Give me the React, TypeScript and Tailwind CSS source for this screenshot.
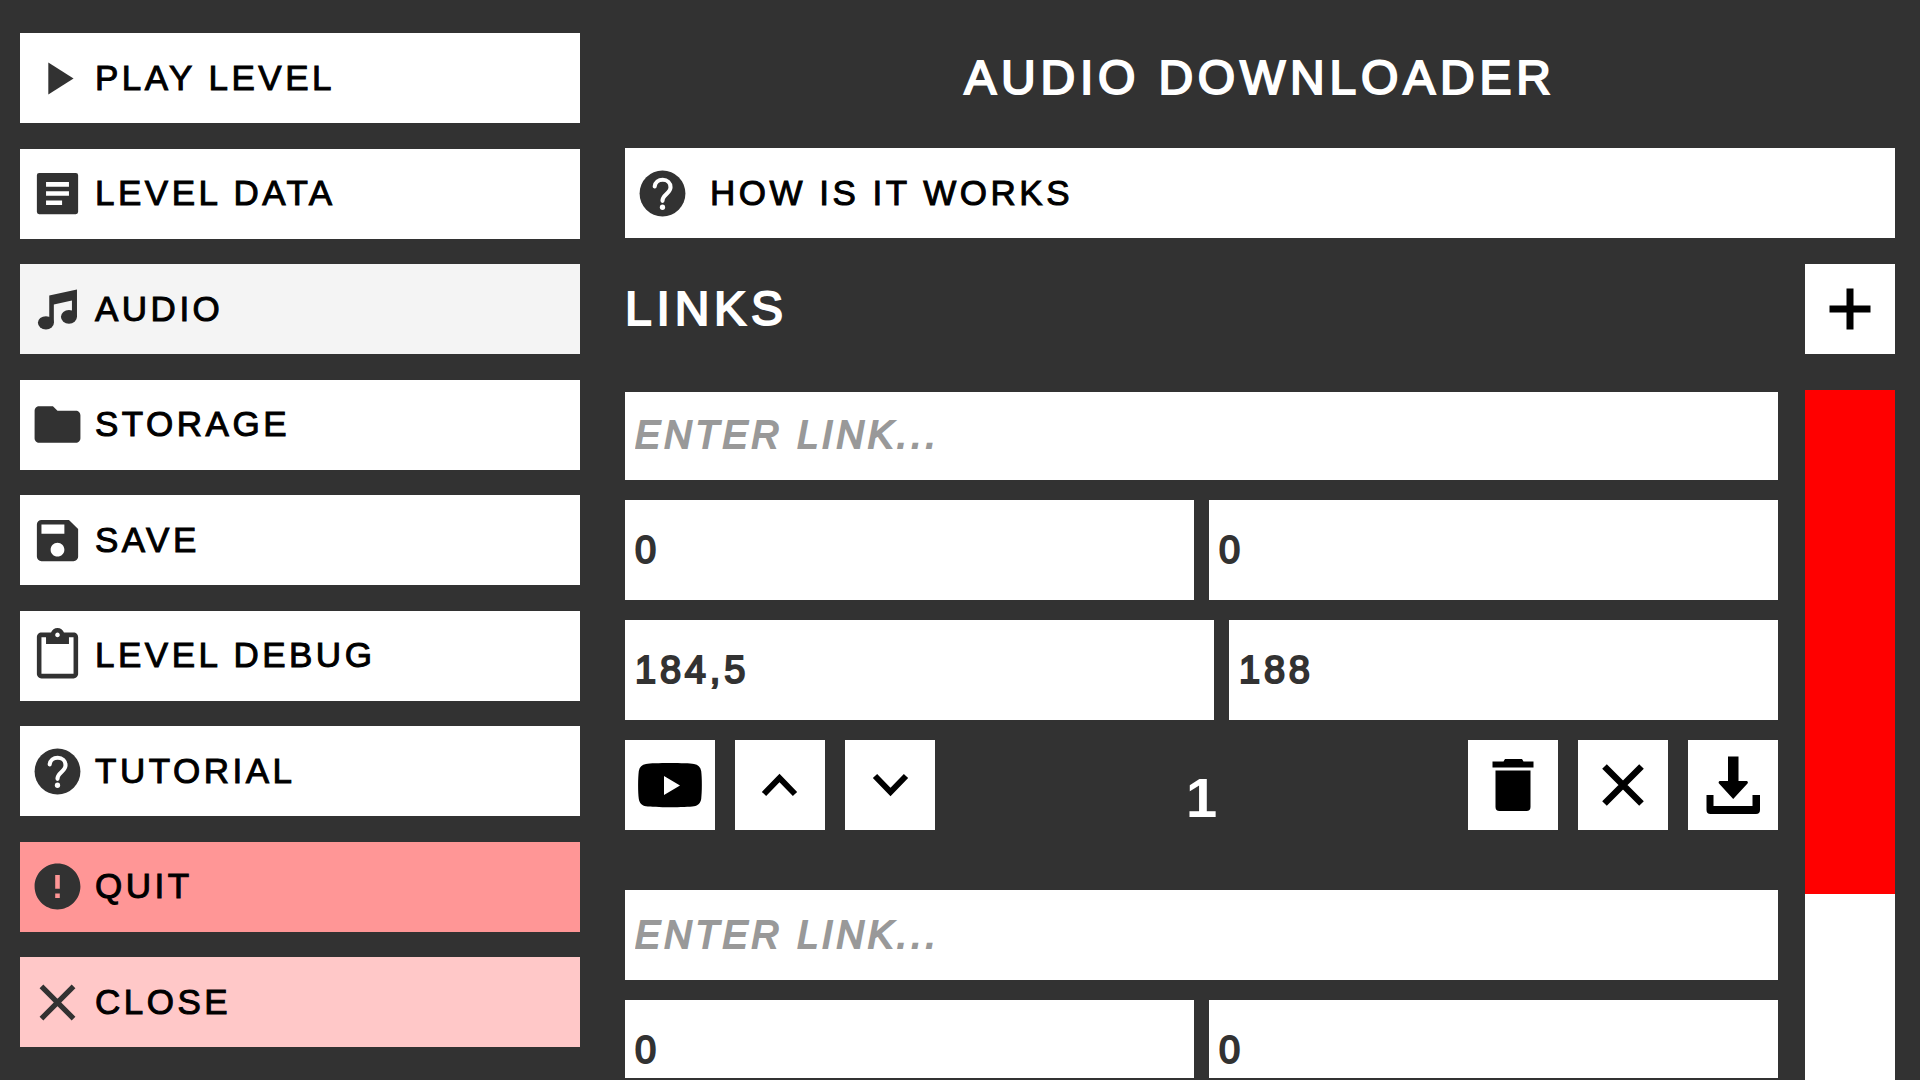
import { ReactNode } from 'react';
import { MdContentPaste, MdError, MdFolder, MdPlayArrow, MdSave } from 'react-icons/md';

const ArticleIcon = () => (
  <svg viewBox="0 0 24 24" fill="currentColor" className="size-[55px] shrink-0" aria-hidden="true">
    <path fillRule="evenodd" d="M4 3h16a1 1 0 0 1 1 1v16a1 1 0 0 1-1 1H4a1 1 0 0 1-1-1V4a1 1 0 0 1 1-1zm3 4v2h10V7zm0 4v2h10v-2zm0 4v2h7v-2z" />
  </svg>
);

const MusicIcon = () => (
  <svg viewBox="0 0 24 24" fill="currentColor" className="size-[55px] shrink-0" aria-hidden="true">
    <path d="M8.4 5.9L20.5 3.3v12h-2.200V8.100l-7.900 1.700v8H8.400z" />
    <ellipse cx="6.950" cy="17.800" rx="3.500" ry="2.900" />
    <ellipse cx="17" cy="15.200" rx="3.500" ry="3" />
  </svg>
);

const HelpIcon = () => (
  <svg viewBox="0 0 24 24" className="size-[55px] shrink-0" aria-hidden="true">
    <circle cx="12" cy="12" r="10" fill="currentColor" />
    <path d="M8.600 8.900C8.800 7.100 10.200 6 12.100 6c2 0 3.400 1.400 3.400 3.300 0 2.700-3.500 3.200-3.500 5.900" fill="none" stroke="white" strokeWidth="1.800" strokeLinecap="round" />
    <circle cx="12" cy="18" r="1.150" fill="white" />
  </svg>
);

const CrossIcon = () => (
  <svg viewBox="0 0 24 24" className="size-[55px] shrink-0" aria-hidden="true">
    <path d="M5 5l14 14M19 5L5 19" fill="none" stroke="currentColor" strokeWidth="2.300" />
  </svg>
);

const menu: { label: string; icon: ReactNode; color: string }[] = [
  { label: 'PLAY LEVEL', icon: <MdPlayArrow className="size-[55px] shrink-0" />, color: 'bg-white' },
  { label: 'LEVEL DATA', icon: <ArticleIcon />, color: 'bg-white' },
  { label: 'AUDIO', icon: <MusicIcon />, color: 'bg-[#f4f4f4]' },
  { label: 'STORAGE', icon: <MdFolder className="size-[55px] shrink-0" />, color: 'bg-white' },
  { label: 'SAVE', icon: <MdSave className="size-[55px] shrink-0" />, color: 'bg-white' },
  { label: 'LEVEL DEBUG', icon: <MdContentPaste className="size-[55px] shrink-0" />, color: 'bg-white' },
  { label: 'TUTORIAL', icon: <HelpIcon />, color: 'bg-white' },
  { label: 'QUIT', icon: <MdError className="size-[55px] shrink-0" />, color: 'bg-[#ff9696]' },
  { label: 'CLOSE', icon: <CrossIcon />, color: 'bg-[#ffc8c8]' },
];

const links = [
  { id: 1, url: '', from: '0', to: '0', start: '184,5', end: '188' },
  { id: 2, url: '', from: '0', to: '0', start: '184,5', end: '188' },
];

const field =
  'min-w-0 bg-white px-[10px] text-[38px] tracking-widest text-[#323232] outline-none [-webkit-text-stroke:2px] placeholder:italic placeholder:text-[#999999] placeholder:opacity-100';

const menuText = 'text-[35px] tracking-widest text-black [-webkit-text-stroke:1px]';

const SquareButton = ({ label, children }: { label: string; children: ReactNode }) => (
  <button type="button" aria-label={label} className="size-[90px] shrink-0 bg-white text-black">
    <svg viewBox="0 0 90 90" fill="currentColor" className="size-full" aria-hidden="true">
      {children}
    </svg>
  </button>
);

const LinkCard = ({ link }: { link: (typeof links)[number] }) => (
  <li className="flex flex-col gap-5">
    <input className={`${field} h-[90px]`} aria-label={`Link ${link.id}`} placeholder="ENTER LINK..." defaultValue={link.url} />
    <div className="flex gap-[15px]">
      <input className={`${field} h-[100px] flex-1`} aria-label="From" defaultValue={link.from} />
      <input className={`${field} h-[100px] flex-1`} aria-label="To" defaultValue={link.to} />
    </div>
    <div className="grid grid-cols-[589fr_549fr] gap-[15px]">
      <input className={`${field} h-[100px]`} aria-label="Start" defaultValue={link.start} />
      <input className={`${field} h-[100px]`} aria-label="End" defaultValue={link.end} />
    </div>
    <div className="flex gap-5">
      <SquareButton label="Open on YouTube">
        <path fillRule="evenodd" d="M45 23c11 0 20 .3 24 1 4 .8 6.500 3 7.200 7 .9 7 .9 21 0 28-.7 4-3.200 6.700-7.200 7.300-8 1.300-40 1.300-48 0-4-.6-6.500-3.300-7.200-7.300-.9-7-.9-21 0-28 .7-4 3.200-6.200 7.200-7 4-.7 13-1 24-1zM39 36v19l16-9.500z" />
      </SquareButton>
      <SquareButton label="Move up">
        <path d="M29 54L44.500 38 60 54" fill="none" stroke="currentColor" strokeWidth="6" />
      </SquareButton>
      <SquareButton label="Move down">
        <path d="M30 36l15.500 16L61 36" fill="none" stroke="currentColor" strokeWidth="6" />
      </SquareButton>
      <span className="flex-1 self-end text-center text-[56px] leading-[64px] font-bold text-white">{link.id}</span>
      <SquareButton label="Delete">
        <path d="M24.500 21.500h11l1.500-2.500h17l1.500 2.500h10V27.500h-41zM27.500 30.500h35V67a4 4 0 0 1-4 4h-27a4 4 0 0 1-4-4z" />
      </SquareButton>
      <SquareButton label="Cancel">
        <path d="M26.500 26.500l37 37M63.500 26.500l-37 37" fill="none" stroke="currentColor" strokeWidth="6.500" />
      </SquareButton>
      <SquareButton label="Download">
        <path d="M40 16.500h10.500V41h8.500q1.500 1 .5 2.500L45.200 59 31 43.500q-1-1.500.5-2.500H40zM18.500 55h7v11h39V55H72v15a4 4 0 0 1-4 4H22.500a4 4 0 0 1-4-4z" />
      </SquareButton>
    </div>
  </li>
);

const App = () => {
  return (
    <div className="flex h-screen gap-[45px] overflow-hidden bg-[#323232] pr-[25px] pl-5 font-['Liberation_Sans',sans-serif]">
      {/* Sidebar */}
      <nav className="flex w-[560px] shrink-0 flex-col justify-between py-[33px]">
        {menu.map((item) => (
          <button key={item.label} type="button" className={`flex h-[90px] items-center gap-[10px] pl-[10px] text-[#323232] ${item.color}`}>
            {item.icon}
            <span className={menuText}>{item.label}</span>
          </button>
        ))}
      </nav>

      {/* Content */}
      <main className="flex min-w-0 flex-1 flex-col pt-[33px]">
        <h1 className="mb-[25px] text-center text-5xl leading-[90px] tracking-widest text-white [-webkit-text-stroke:2px]">AUDIO DOWNLOADER</h1>
        <button type="button" className="flex h-[90px] shrink-0 items-center gap-5 bg-white pl-[10px] text-[#323232]">
          <HelpIcon />
          <span className={menuText}>HOW IS IT WORKS</span>
        </button>

        <div className="mt-[26px] mb-9 flex items-center justify-between">
          <h2 className="text-5xl tracking-widest text-white [-webkit-text-stroke:2px]">LINKS</h2>
          <SquareButton label="Add link">
            <path d="M41.500 24.500h7v17h17v7h-17v17h-7v-17h-17v-7h17z" />
          </SquareButton>
        </div>

        <div className="flex min-h-0 flex-1 gap-[27px]">
          <div className="min-w-0 flex-1 overflow-hidden border-y-2 border-[#323232]">
            <ul className="-mt-0.5 flex flex-col gap-[60px]">
              {links.map((link) => (
                <LinkCard key={link.id} link={link} />
              ))}
            </ul>
          </div>
          {/* Scrollbar */}
          <div className="w-[90px] shrink-0 bg-white">
            <div className="h-[73%] bg-[#ff0000]" />
          </div>
        </div>
      </main>
    </div>
  );
};

export default App;
